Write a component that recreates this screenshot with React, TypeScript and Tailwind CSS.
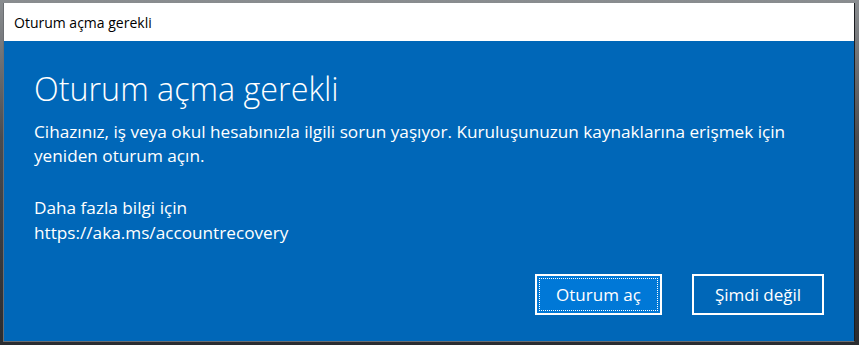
import React from 'react';

export default function App() {
  return (
    <div
      className="w-[859px] h-[345px] bg-[linear-gradient(180deg,#8a8d90_0%,#4a4c50_40%,#2a2c30_100%)] pt-[3px] pl-[3px] pr-[4px] pb-[3px]"
      style={{ fontFamily: '"Open Sans", "Noto Sans", sans-serif' }}
    >
      <div className="w-full h-full flex flex-col border border-[#6b6e72] border-t-0 border-r-[#1a1c20]">
        {/* Title bar */}
        <div className="h-[38px] bg-white flex items-center pl-[10px] text-[14px] text-black shrink-0">
          Oturum açma gerekli
        </div>

        {/* Content */}
        <div className="flex-1 bg-[#0067b8] text-white flex flex-col pl-[30px] pr-[30px]">
          <h1 className="text-[32.3px] font-light leading-none mt-[31px]">Oturum açma gerekli</h1>
          <p className="text-[17.2px] leading-[24px] mt-[16px]">
            Cihazınız, iş veya okul hesabınızla ilgili sorun yaşıyor. Kuruluşunuzun kaynaklarına erişmek için
            <br />
            yeniden oturum açın.
          </p>
          <p className="text-[17.2px] leading-[25px] mt-[27px]">
            Daha fazla bilgi için
            <br />
            https://aka.ms/accountrecovery
          </p>

          <div className="flex justify-end gap-[30px] mt-[29px]">
            <button className="w-[127px] h-[41px] border-2 border-white bg-[#0078d7] p-[2px] text-[17px] font-medium text-white">
              <span className="w-full h-full flex items-center justify-center border border-dotted border-white">
                Oturum aç
              </span>
            </button>
            <button className="w-[132px] h-[41px] border-2 border-white bg-transparent text-[17px] font-medium text-white">
              Şimdi değil
            </button>
          </div>
        </div>
      </div>
    </div>
  );
}
